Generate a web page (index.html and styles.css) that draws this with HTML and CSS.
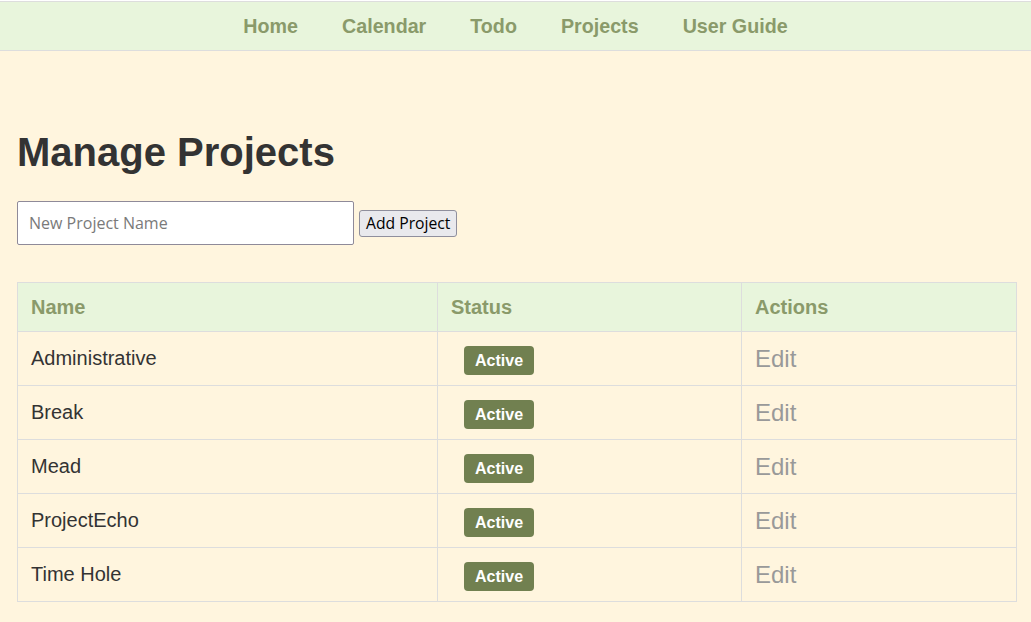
FILE: index.html
```html
<!DOCTYPE html>
<html lang="en">
<head>
<meta charset="utf-8">
<title>Manage Projects</title>
<link rel="stylesheet" href="styles.css">
</head>
<body>
<nav class="topnav">
  <a href="#">Home</a>
  <a href="#">Calendar</a>
  <a href="#">Todo</a>
  <a href="#">Projects</a>
  <a href="#">User Guide</a>
</nav>
<main class="content">
  <h1 class="title">Manage Projects</h1>
  <form class="add-form">
    <input class="name-input" type="text" placeholder="New Project Name">
    <button class="add-btn" type="button">Add Project</button>
  </form>
  <table class="projects">
    <colgroup>
      <col class="c-name"><col class="c-status"><col class="c-actions">
    </colgroup>
    <thead>
      <tr><th>Name</th><th>Status</th><th>Actions</th></tr>
    </thead>
    <tbody>
      <tr><td>Administrative</td><td><span class="badge">Active</span></td><td><a class="edit" href="#">Edit</a></td></tr>
      <tr><td>Break</td><td><span class="badge">Active</span></td><td><a class="edit" href="#">Edit</a></td></tr>
      <tr><td>Mead</td><td><span class="badge">Active</span></td><td><a class="edit" href="#">Edit</a></td></tr>
      <tr><td>ProjectEcho</td><td><span class="badge">Active</span></td><td><a class="edit" href="#">Edit</a></td></tr>
      <tr><td>Time Hole</td><td><span class="badge">Active</span></td><td><a class="edit" href="#">Edit</a></td></tr>
    </tbody>
  </table>
</main>
</body>
</html>
```
FILE: styles.css
```css
html, body {
  margin: 0;
  padding: 0;
  background: #fff5de;
  font-family: "Liberation Sans", Arial, sans-serif;
  color: #333;
}
.topnav {
  margin-top: 1px;
  box-shadow: 0 -1px 0 #fff;
  background: #e8f5dc;
  border-top: 1px solid #ddd;
  border-bottom: 1px solid #ddd;
  height: 48px;
  display: flex;
  justify-content: center;
  align-items: center;
}
.topnav a {
  color: #8a9a6a;
  font-weight: bold;
  font-size: 19.7px;
  text-decoration: none;
  padding: 0 22px;
}
.content {
  padding: 0 15px 0 17px;
}
.title {
  margin: 78px 0 0 0;
  font-size: 40px;
  line-height: 46px;
  font-weight: bold;
  color: #333;
}
.add-form {
  margin-top: 26px;
  display: flex;
  align-items: center;
  gap: 5px;
}
.name-input {
  box-sizing: border-box;
  width: 337px;
  height: 44px;
  padding: 0 11px;
  border: 1px solid #8f8a99;
  border-radius: 2px;
  background: #fff;
  font-family: "Open Sans", "Noto Sans", sans-serif;
  font-size: 16px;
  color: #333;
}
.name-input::placeholder {
  color: #7a7a7a;
}
.add-btn {
  box-sizing: border-box;
  height: 27px;
  padding: 0 6px;
  border: 1px solid #8f8f9d;
  border-radius: 3px;
  background: #e9e9ed;
  font-family: "Open Sans", "Noto Sans", sans-serif;
  font-size: 15.7px;
  color: #000;
}
.projects {
  margin-top: 37px;
  width: 1000px;
  border-collapse: collapse;
}
.c-name { width: 420px; }
.c-status { width: 304px; }
.projects th,
.projects td {
  border: 1px solid #ddd;
  padding: 13px;
  text-align: left;
  font-size: 20px;
}
.projects th {
  background: #e8f5dc;
  color: #8a9a6a;
  font-weight: bold;
  line-height: 22px;
}
.projects td {
  line-height: 27px;
  color: #333;
}
.badge {
  display: inline-block;
  margin: 1px 0 -3px 13px;
  background: #718050;
  color: #fff;
  font-weight: bold;
  font-size: 16px;
  line-height: 29px;
  padding: 0 11px;
  border-radius: 4px;
  vertical-align: top;
}
.edit {
  display: inline-block;
  vertical-align: top;
  line-height: 27px;
  color: #999;
  font-size: 24px;
  text-decoration: none;
}
```
